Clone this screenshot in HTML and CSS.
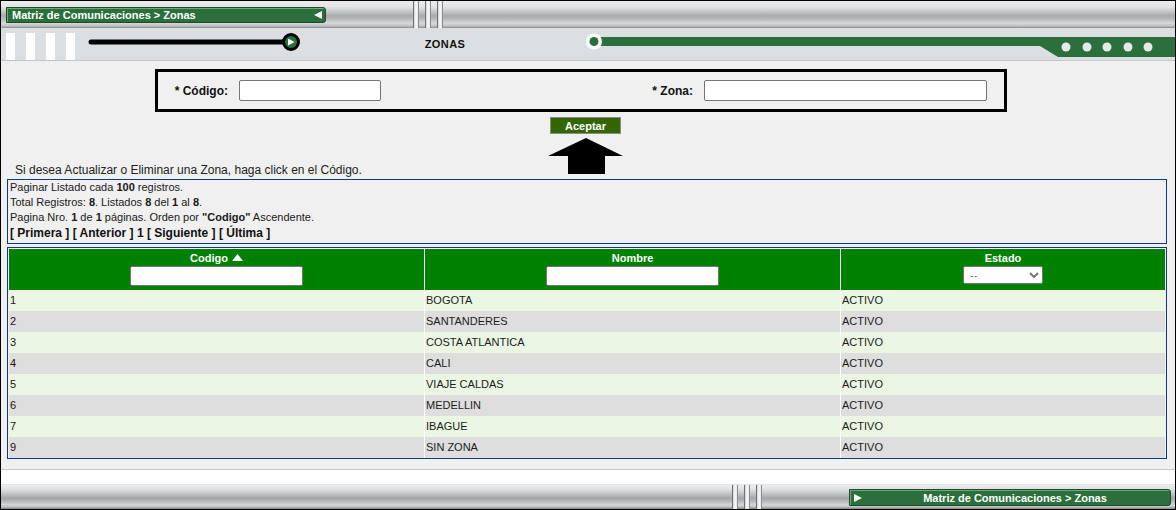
FILE: index.html
```html
<!DOCTYPE html>
<html lang="es">
<head>
<meta charset="utf-8">
<title>Zonas</title>
<link rel="stylesheet" href="styles.css">
</head>
<body>
<div class="page">
  <header class="top">
    <div class="topbar">
      <div class="tab tab-top">
        <span>Matriz de Comunicaciones &gt; Zonas</span>
        <svg class="tri" width="8" height="8" viewBox="0 0 8 8"><polygon points="8,0 8,8 0,4" fill="#fff"/></svg>
      </div>
      <div class="grip"><i></i><i></i><i></i></div>
    </div>
    <div class="subbar">
      <div class="bars"><i></i><i></i><i></i><i></i></div>
      <svg class="slider" width="230" height="32" viewBox="0 0 230 32">
        <line x1="16" y1="14" x2="208" y2="14" stroke="#000" stroke-width="5" stroke-linecap="round"/>
        <circle cx="216" cy="14" r="7.5" fill="#2a6f3c" stroke="#000" stroke-width="3"/>
        <polygon points="213,10.5 213,17.5 219.5,14" fill="#fff"/>
      </svg>
      <div class="title">ZONAS</div>
      <svg class="rail" width="590" height="32" viewBox="0 0 590 32">
        <polygon points="14,9 590,9 590,29 473,29 455,18 14,18" fill="#2a6f3c"/>
        <circle cx="9" cy="13.5" r="8" fill="#fff"/>
        <circle cx="9" cy="13.5" r="4.5" fill="#2a6f3c"/>
        <circle cx="481" cy="19" r="4.5" fill="#e6e8e9"/>
        <circle cx="502" cy="19" r="4.5" fill="#e6e8e9"/>
        <circle cx="522" cy="19" r="4.5" fill="#e6e8e9"/>
        <circle cx="543" cy="19" r="4.5" fill="#e6e8e9"/>
        <circle cx="563" cy="19" r="4.5" fill="#e6e8e9"/>
      </svg>
    </div>
  </header>

  <main class="content">
    <form class="form-box">
      <label class="lbl lbl-codigo" for="codigo">* Código:</label>
      <input class="txt txt-codigo" id="codigo" type="text">
      <label class="lbl lbl-zona" for="zona">* Zona:</label>
      <input class="txt txt-zona" id="zona" type="text">
    </form>
    <div class="actions"><button class="btn" type="button">Aceptar</button></div>
    <div class="hint-row">
      <p class="hint">Si desea Actualizar o Eliminar una Zona, haga click en el Código.</p>
      <svg class="arrow" width="75" height="36" viewBox="0 0 75 36">
        <polygon points="38,0 75,18 57,18 57,36 20,36 20,18 0,18" fill="#000"/>
      </svg>
    </div>

    <div class="paging">
      <div class="pl">Paginar Listado cada <b>100</b> registros.</div>
      <div class="pl">Total Registros: <b>8</b>. Listados <b>8</b> del <b>1</b> al <b>8</b>.</div>
      <div class="pl">Pagina Nro. <b>1</b> de <b>1</b> páginas. Orden por <b>"Codigo"</b> Ascendente.</div>
      <div class="pl nav">[ Primera ] [ Anterior ] 1 [ Siguiente ] [ Última ]</div>
    </div>

    <div class="grid-box">
      <div class="row head">
        <div class="cell">
          <div class="hname">Codigo <svg width="11" height="7" viewBox="0 0 11 7"><polygon points="5.5,0 11,7 0,7" fill="#fff"/></svg></div>
          <input class="filter" type="text">
        </div>
        <div class="cell">
          <div class="hname">Nombre</div>
          <input class="filter" type="text">
        </div>
        <div class="cell">
          <div class="hname">Estado</div>
          <select class="sel"><option>--</option></select>
        </div>
      </div>
      <div class="row odd"><div class="cell code">1</div><div class="cell">BOGOTA</div><div class="cell">ACTIVO</div></div>
      <div class="row even"><div class="cell code">2</div><div class="cell">SANTANDERES</div><div class="cell">ACTIVO</div></div>
      <div class="row odd"><div class="cell code">3</div><div class="cell">COSTA ATLANTICA</div><div class="cell">ACTIVO</div></div>
      <div class="row even"><div class="cell code">4</div><div class="cell">CALI</div><div class="cell">ACTIVO</div></div>
      <div class="row odd"><div class="cell code">5</div><div class="cell">VIAJE CALDAS</div><div class="cell">ACTIVO</div></div>
      <div class="row even"><div class="cell code">6</div><div class="cell">MEDELLIN</div><div class="cell">ACTIVO</div></div>
      <div class="row odd"><div class="cell code">7</div><div class="cell">IBAGUE</div><div class="cell">ACTIVO</div></div>
      <div class="row even"><div class="cell code">9</div><div class="cell">SIN ZONA</div><div class="cell">ACTIVO</div></div>
    </div>
  </main>

  <div class="whiteband"></div>
  <footer class="bottombar">
    <div class="grip"><i></i><i></i><i></i></div>
    <div class="tab tab-bottom">
      <svg class="tri" width="8" height="8" viewBox="0 0 8 8"><polygon points="0,0 0,8 8,4" fill="#fff"/></svg>
      <span class="tab-text">Matriz de Comunicaciones &gt; Zonas</span>
    </div>
  </footer>
</div>
</body>
</html>
```

FILE: styles.css
```css
* { box-sizing: border-box; }
html, body { margin: 0; padding: 0; }
body {
  font-family: "Liberation Sans", Arial, sans-serif;
  background: #f0f0f0;
}
.page {
  width: 1176px;
  height: 510px;
  border: 1px solid #000;
  display: flex;
  flex-direction: column;
  overflow: hidden;
  background: #f0f0f0;
}

/* ---------- top header ---------- */
.topbar {
  height: 27px;
  display: flex;
  align-items: flex-start;
  background: linear-gradient(#ececec 0%, #e2e3e4 22%, #c3c6c8 40%, #a7abad 55%, #b9bcbe 68%, #d6d7d8 82%, #c4c5c6 92%, #87898b 100%);
}
.tab {
  display: flex;
  align-items: center;
  background: #2a6f3c;
  color: #fff;
  font-weight: bold;
  font-size: 11px;
  border: 1px solid #1b4b28;
  box-shadow: inset 1px 1px 0 #74a37f;
  border-radius: 0 3px 3px 0;
  white-space: nowrap;
}
.tab-top {
  margin: 6px 0 0 5px;
  width: 320px;
  height: 16px;
  padding: 0 3px 0 5px;
  justify-content: space-between;
}
.grip {
  width: 38px;
  height: 100%;
  display: flex;
  gap: 6px;
  padding: 0 4px;
}
.grip i {
  display: block;
  width: 6px;
  height: 100%;
  border-left: 1px solid #707274;
  border-right: 1px solid #8a8c8e;
  background: linear-gradient(to right, #cfd1d2, #fafafa 50%, #e4e5e6);
}
.topbar .grip { margin-left: 83px; }

.subbar {
  height: 33px;
  display: flex;
  align-items: flex-start;
  background: #dcdfe2;
  border-bottom: 1px solid #c4c6c8;
}
.bars {
  display: flex;
  gap: 11px;
  padding-left: 5px;
  height: 32px;
  align-items: flex-end;
}
.bars i {
  display: block;
  width: 9px;
  height: 27px;
  background: #fff;
}
.slider { display: block; flex: none; }
.title {
  flex: 1;
  text-align: center;
  font-size: 11px;
  font-weight: bold;
  color: #111;
  letter-spacing: 0.4px;
  line-height: 32px;
}
.rail { display: block; flex: none; }

/* ---------- content ---------- */
.content {
  flex: 1;
  padding-top: 8px;
  border-bottom: 1px solid #c8c8c8;
  display: flex;
  flex-direction: column;
}
.form-box {
  margin: 0 0 0 154px;
  width: 852px;
  height: 43px;
  border: 3px solid #000;
  display: flex;
  align-items: center;
}
.lbl {
  font-size: 12px;
  font-weight: bold;
  color: #111;
  text-align: right;
  margin-right: 11px;
}
.lbl-codigo { width: 70px; }
.lbl-zona { width: 312px; }
.txt {
  height: 21px;
  border: 1px solid #767676;
  border-radius: 2px;
  background: #fff;
  padding: 1px 2px;
  font-size: 12px;
}
.txt-codigo { width: 142px; }
.txt-zona { width: 283px; }

.actions {
  margin-top: 5px;
  padding-left: 549px;
  display: flex;
}
.btn {
  width: 71px;
  height: 17px;
  padding: 0;
  background: #336600;
  border: 1px solid #8a8a8a;
  color: #fff;
  font-family: "Liberation Sans", Arial, sans-serif;
  font-weight: bold;
  font-size: 11px;
  line-height: 14px;
}
.hint-row {
  margin-top: 4px;
  display: grid;
  grid-template-columns: 547px 75px;
  align-items: end;
}
.hint {
  margin: 0;
  padding-left: 14px;
  font-size: 12px;
  line-height: 14px;
  color: #222;
}
.arrow { display: block; margin-bottom: 3px; }

.paging {
  margin: 2px 0 0 6px;
  width: 1160px;
  height: 65px;
  border: 1px solid #0a3a8f;
  padding: 0 2px 2px;
  color: #1a1a1a;
}
.pl { font-size: 11px; line-height: 15px; }
.pl b { font-weight: bold; }
.nav { font-size: 12px; font-weight: bold; line-height: 16px; color: #111; }

.grid-box {
  margin: 3px 0 0 6px;
  width: 1160px;
  height: 212px;
  border: 1px solid #0a3a8f;
  padding: 1px 1px 0 1px;
}
.row {
  display: grid;
  grid-template-columns: 415px 416px 325px;
}
.row .cell + .cell { border-left: 1px solid #fff; }
.head {
  height: 41px;
  background: #008000;
}
.head .cell {
  padding-top: 2px;
  text-align: center;
}
.hname {
  color: #fff;
  font-size: 11px;
  font-weight: bold;
  line-height: 15px;
  height: 15px;
}
.hname svg { display: inline-block; vertical-align: 1px; margin-left: 1px; }
.filter {
  display: block;
  margin: 0 auto;
  width: 173px;
  height: 20px;
  border: 1px solid #767676;
  border-radius: 2px;
  background: #fff;
  padding: 1px 2px;
}
.sel {
  display: block;
  margin: 0 auto;
  width: 80px;
  height: 18px;
  font-size: 11px;
  font-family: "Liberation Sans", Arial, sans-serif;
  color: #777;
  border: 1px solid #767676;
  border-radius: 2px;
  background: #fff;
  padding: 0 2px;
}
.row.odd, .row.even { height: 21px; }
.odd { background: #ebf7e3; }
.even { background: #dedede; }
.odd .cell, .even .cell {
  font-size: 11px;
  line-height: 21px;
  padding-left: 1px;
  color: #1c1c1c;
}
.odd .code, .even .code { color: #2a1010; }

/* ---------- bottom ---------- */
.whiteband {
  height: 15px;
  background: #fff;
  border-bottom: 1px solid #e2e2e2;
}
.bottombar {
  height: 24px;
  display: flex;
  align-items: flex-start;
  background: linear-gradient(#ededed 0%, #e0e1e2 18%, #c0c3c5 38%, #a2a6a8 55%, #b6b9bb 68%, #d4d5d6 82%, #c4c5c6 90%, #818385 100%);
}
.bottombar .grip { margin-left: 727px; }
.tab-bottom {
  margin: 4px 0 0 83px;
  width: 322px;
  height: 17px;
  padding-left: 4px;
}
.tab-text { flex: 1; text-align: center; padding-right: 2px; }
.tri { display: block; flex: none; }
```
